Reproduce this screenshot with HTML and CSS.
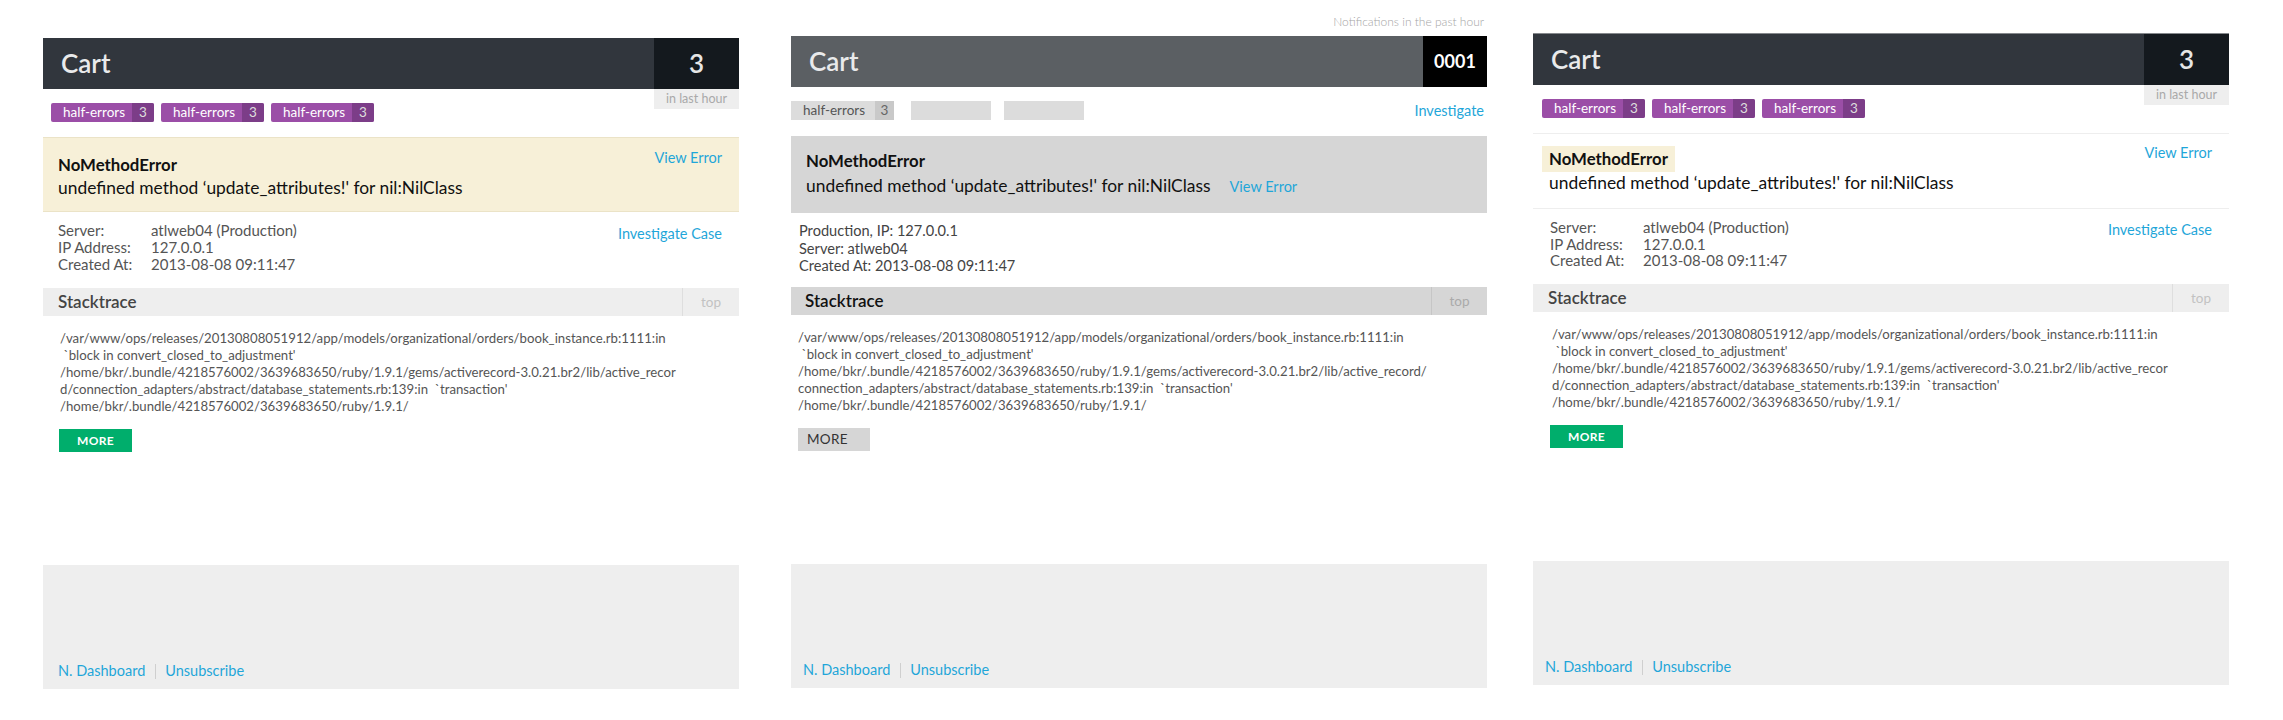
FILE: index.html
```html
<!DOCTYPE html>
<html>
<head>
<meta charset="utf-8">
<link rel="stylesheet" href="styles.css">
</head>
<body>
<div class="page">

  <!-- Column A -->
  <section class="col col-a">
    <div class="bar">
      <div class="bar-title">Cart</div>
      <div class="bar-count">3<div class="hint">in last hour</div></div>
    </div>
    <div class="tags">
      <span class="tag"><span class="tag-name">half-errors</span><span class="tag-num">3</span></span>
      <span class="tag"><span class="tag-name">half-errors</span><span class="tag-num">3</span></span>
      <span class="tag"><span class="tag-name">half-errors</span><span class="tag-num">3</span></span>
    </div>
    <div class="errbox">
      <div class="err-text">
        <div class="err-title">NoMethodError</div>
        <div class="err-msg">undefined method ‘update_attributes!' for nil:NilClass</div>
      </div>
      <a class="link err-link">View Error</a>
    </div>
    <div class="meta">
      <div class="meta-list">
        <div><span class="meta-label">Server:</span>atlweb04 (Production)</div>
        <div><span class="meta-label">IP Address:</span>127.0.0.1</div>
        <div><span class="meta-label">Created At:</span>2013-08-08 09:11:47</div>
      </div>
      <a class="link meta-link">Investigate Case</a>
    </div>
    <div class="stackbar">
      <div class="stackbar-title">Stacktrace</div>
      <div class="stackbar-top">top</div>
    </div>
    <div class="stack">
      <span>/var/www/ops/releases/20130808051912/app/models/organizational/orders/book_instance.rb:1111:in</span>
      <span>&nbsp;`block in convert_closed_to_adjustment'</span>
      <span>/home/bkr/.bundle/4218576002/3639683650/ruby/1.9.1/gems/activerecord-3.0.21.br2/lib/active_recor</span>
      <span>d/connection_adapters/abstract/database_statements.rb:139:in &nbsp;`transaction'</span>
      <span>/home/bkr/.bundle/4218576002/3639683650/ruby/1.9.1/</span>
    </div>
    <div class="more">MORE</div>
    <footer class="foot">
      <a class="link">N. Dashboard</a><span class="foot-sep"></span><a class="link">Unsubscribe</a>
    </footer>
  </section>

  <!-- Column B -->
  <section class="col col-b">
    <div class="notif">Notifications in the past hour</div>
    <div class="bar bar-b">
      <div class="bar-title">Cart</div>
      <div class="bar-count count-b">0001</div>
    </div>
    <div class="tagrow">
      <span class="tag tag-b"><span class="tag-name">half-errors</span><span class="tag-num">3</span></span>
      <span class="ph ph-1"></span>
      <span class="ph ph-2"></span>
      <a class="link tagrow-link">Investigate</a>
    </div>
    <div class="errbox-b">
      <div class="err-title">NoMethodError</div>
      <div class="err-msg msg-b">undefined method ‘update_attributes!' for nil:NilClass<a class="link inline-link">View Error</a></div>
    </div>
    <div class="meta-b">
      <div>Production, IP: 127.0.0.1</div>
      <div>Server: atlweb04</div>
      <div>Created At: 2013-08-08 09:11:47</div>
    </div>
    <div class="stackbar stackbar-b">
      <div class="stackbar-title">Stacktrace</div>
      <div class="stackbar-top">top</div>
    </div>
    <div class="stack stack-b">
      <span>/var/www/ops/releases/20130808051912/app/models/organizational/orders/book_instance.rb:1111:in</span>
      <span>&nbsp;`block in convert_closed_to_adjustment'</span>
      <span>/home/bkr/.bundle/4218576002/3639683650/ruby/1.9.1/gems/activerecord-3.0.21.br2/lib/active_record/</span>
      <span>connection_adapters/abstract/database_statements.rb:139:in &nbsp;`transaction'</span>
      <span>/home/bkr/.bundle/4218576002/3639683650/ruby/1.9.1/</span>
    </div>
    <div class="more more-b">MORE</div>
    <footer class="foot foot-b">
      <a class="link">N. Dashboard</a><span class="foot-sep"></span><a class="link">Unsubscribe</a>
    </footer>
  </section>

  <!-- Column C -->
  <section class="col col-c">
    <div class="bar bar-c">
      <div class="bar-title">Cart</div>
      <div class="bar-count">3<div class="hint">in last hour</div></div>
    </div>
    <div class="tags tags-c">
      <span class="tag"><span class="tag-name">half-errors</span><span class="tag-num">3</span></span>
      <span class="tag"><span class="tag-name">half-errors</span><span class="tag-num">3</span></span>
      <span class="tag"><span class="tag-name">half-errors</span><span class="tag-num">3</span></span>
    </div>
    <div class="errsec">
      <div class="err-text">
        <div class="err-title title-hl">NoMethodError</div>
        <div class="err-msg msg-c">undefined method ‘update_attributes!' for nil:NilClass</div>
      </div>
      <a class="link err-link-c">View Error</a>
    </div>
    <div class="meta meta-c">
      <div class="meta-list">
        <div><span class="meta-label">Server:</span>atlweb04 (Production)</div>
        <div><span class="meta-label">IP Address:</span>127.0.0.1</div>
        <div><span class="meta-label">Created At:</span>2013-08-08 09:11:47</div>
      </div>
      <a class="link meta-link">Investigate Case</a>
    </div>
    <div class="stackbar">
      <div class="stackbar-title">Stacktrace</div>
      <div class="stackbar-top">top</div>
    </div>
    <div class="stack stack-c">
      <span>/var/www/ops/releases/20130808051912/app/models/organizational/orders/book_instance.rb:1111:in</span>
      <span>&nbsp;`block in convert_closed_to_adjustment'</span>
      <span>/home/bkr/.bundle/4218576002/3639683650/ruby/1.9.1/gems/activerecord-3.0.21.br2/lib/active_recor</span>
      <span>d/connection_adapters/abstract/database_statements.rb:139:in &nbsp;`transaction'</span>
      <span>/home/bkr/.bundle/4218576002/3639683650/ruby/1.9.1/</span>
    </div>
    <div class="more more-c">MORE</div>
    <footer class="foot foot-c">
      <a class="link">N. Dashboard</a><span class="foot-sep"></span><a class="link">Unsubscribe</a>
    </footer>
  </section>

</div>
</body>
</html>
```

FILE: styles.css
```css
* { box-sizing: border-box; }

body {
  margin: 0;
  background: #fff;
  font-family: Lato, "Open Sans", "Liberation Sans", sans-serif;
  color: #222;
}

.page {
  display: flex;
  align-items: flex-start;
  padding-left: 43px;
}

.col { width: 696px; flex: none; }
.col-a { margin-top: 38px; }
.col-b { margin-top: 15px; margin-left: 52px; }
.col-c { margin-top: 33px; margin-left: 46px; }

.link { color: #1fa6d9; text-decoration: none; }

/* notifications label */
.notif {
  height: 14px;
  margin-bottom: 7px;
  padding-right: 3px;
  text-align: right;
  font-size: 12px;
  font-weight: 300;
  line-height: 14px;
  color: #a5a5a5;
}

/* header bar */
.bar {
  display: flex;
  height: 51px;
  background: #31363d;
}
.bar-title {
  flex: 1;
  padding-left: 18px;
  color: #e9eaeb;
  font-size: 26px;
  font-weight: 600;
  line-height: 51px;
}
.bar-count {
  position: relative;
  width: 85px;
  background: #14191e;
  color: #e6e6e6;
  text-align: center;
  font-size: 26px;
  font-weight: 600;
  line-height: 51px;
}
.hint {
  position: absolute;
  top: 100%;
  left: 0;
  right: 0;
  height: 20px;
  background: #eeeeee;
  color: #a9a9a9;
  font-size: 12.5px;
  font-weight: 400;
  line-height: 20px;
}
.bar-b { background: #5b5f63; }
.count-b {
  width: 64px;
  background: #000;
  color: #fff;
  font-size: 18px;
  font-weight: 700;
}
.bar-c {
  height: 52px;
  border-top: 1px solid #85888c;
}

/* tags */
.tags {
  display: flex;
  gap: 7px;
  margin-top: 14px;
  padding-left: 8px;
}
.tags-c { padding-left: 9px; }
.tag {
  display: flex;
  height: 19px;
  border-radius: 2px;
  overflow: hidden;
  background: #9b4ea7;
  color: #fff;
  font-size: 13.5px;
  line-height: 19px;
}
.tag-name { width: 81px; padding-left: 12px; }
.tag-num {
  width: 22px;
  text-align: center;
  background: #7c3d88;
  color: #ddd;
}

/* column B tag row */
.tagrow {
  display: flex;
  align-items: center;
  margin-top: 14px;
  height: 19px;
}
.tag-b {
  background: #dcdcdc;
  color: #555;
  border-radius: 0;
}
.tag-b .tag-name { width: 84px; padding-left: 12px; }
.tag-b .tag-num { width: 19px; background: #c9c9c9; color: #666; }
.ph { height: 19px; width: 80px; background: #dcdcdc; }
.ph-1 { margin-left: 17px; }
.ph-2 { margin-left: 13px; }
.tagrow-link {
  margin-left: auto;
  padding-right: 3px;
  font-size: 14.5px;
}

/* error box A */
.errbox {
  display: flex;
  justify-content: space-between;
  align-items: flex-start;
  margin-top: 15px;
  padding: 10px 17px 12px 15px;
  background: #f7f0d8;
  border-top: 1px solid #ebe3c7;
  border-bottom: 1px solid #ebe3c7;
}
.errbox .err-text { padding-top: 7px; }
.err-title {
  font-size: 16.8px;
  font-weight: 700;
  line-height: 20px;
  color: #111;
}
.err-msg {
  margin-top: 2px;
  font-size: 17.4px;
  line-height: 22px;
  color: #111;
}
.err-link { font-size: 14.5px; line-height: 20px; }

/* error box B */
.errbox-b {
  margin-top: 16px;
  padding: 15px 15px 15px 15px;
  background: #d6d6d6;
}
.msg-b { margin-top: 4px; }
.inline-link { margin-left: 19px; font-size: 14.5px; }

/* error section C */
.errsec {
  display: flex;
  justify-content: space-between;
  align-items: flex-start;
  margin-top: 15px;
  padding: 12px 17px 14px 9px;
  border-top: 1px solid #eeeeee;
  border-bottom: 1px solid #eeeeee;
}
.title-hl {
  display: inline-block;
  padding: 0 7px;
  background: #f7f0d8;
  line-height: 26px;
}
.msg-c { margin-top: 0; padding-left: 7px; }
.err-link-c { margin-top: -3px; font-size: 14.5px; line-height: 20px; }

/* meta */
.meta {
  display: flex;
  justify-content: space-between;
  align-items: flex-start;
  padding: 10px 17px 0 15px;
  font-size: 15px;
  line-height: 17px;
  color: #555;
}
.meta-label { display: inline-block; width: 93px; }
.meta-link { margin-top: 3px; font-size: 14.5px; }
.meta-c {
  padding: 10px 17px 0 17px;
  line-height: 16.5px;
}

.meta-b {
  padding: 9px 8px 0 8px;
  font-size: 14.6px;
  line-height: 17.5px;
  color: #444;
}

/* stacktrace bar */
.stackbar {
  display: flex;
  height: 28px;
  margin-top: 15px;
  background: #eeeeee;
}
.stackbar-title {
  flex: 1;
  padding-left: 15px;
  font-size: 17px;
  font-weight: 600;
  line-height: 28px;
  color: #444;
}
.stackbar-top {
  width: 57px;
  border-left: 1px solid #dedede;
  text-align: center;
  font-size: 13.5px;
  line-height: 28px;
  color: #c2c2c2;
}
.stackbar-b {
  margin-top: 12px;
  background: #d6d6d6;
}
.stackbar-b .stackbar-title { padding-left: 14px; color: #111; }
.stackbar-b .stackbar-top { width: 56px; border-left-color: #c6c6c6; color: #aaa; }

/* stack text */
.stack {
  padding: 14px 0 0 17px;
  font-size: 13.2px;
  line-height: 17px;
  color: #555;
}
.stack span { display: block; white-space: nowrap; }
.stack-b { padding-left: 7px; }
.stack-c { padding-left: 19px; }

/* more */
.more {
  width: 73px;
  height: 23px;
  margin: 14px 0 0 16px;
  background: #00ae6c;
  color: #fff;
  font-size: 12px;
  font-weight: 700;
  line-height: 23px;
  text-align: center;
  letter-spacing: 0.3px;
}
.more-b {
  width: 72px;
  margin-left: 7px;
  background: #d6d6d6;
  color: #333;
  font-size: 13.5px;
  font-weight: 400;
  text-align: left;
  padding-left: 9px;
}
.more-c { margin-left: 17px; }

/* footer */
.foot {
  display: flex;
  align-items: flex-end;
  height: 124px;
  margin-top: 113px;
  padding: 0 0 10px 15px;
  background: #eeeeee;
  font-size: 14.5px;
  line-height: 16px;
}
.foot-sep {
  width: 1px;
  height: 15px;
  margin: 0 9px 0 10px;
  background: #cfcfcf;
}
.foot-b { padding-left: 12px; }
.foot-c { padding-left: 12px; }
```
